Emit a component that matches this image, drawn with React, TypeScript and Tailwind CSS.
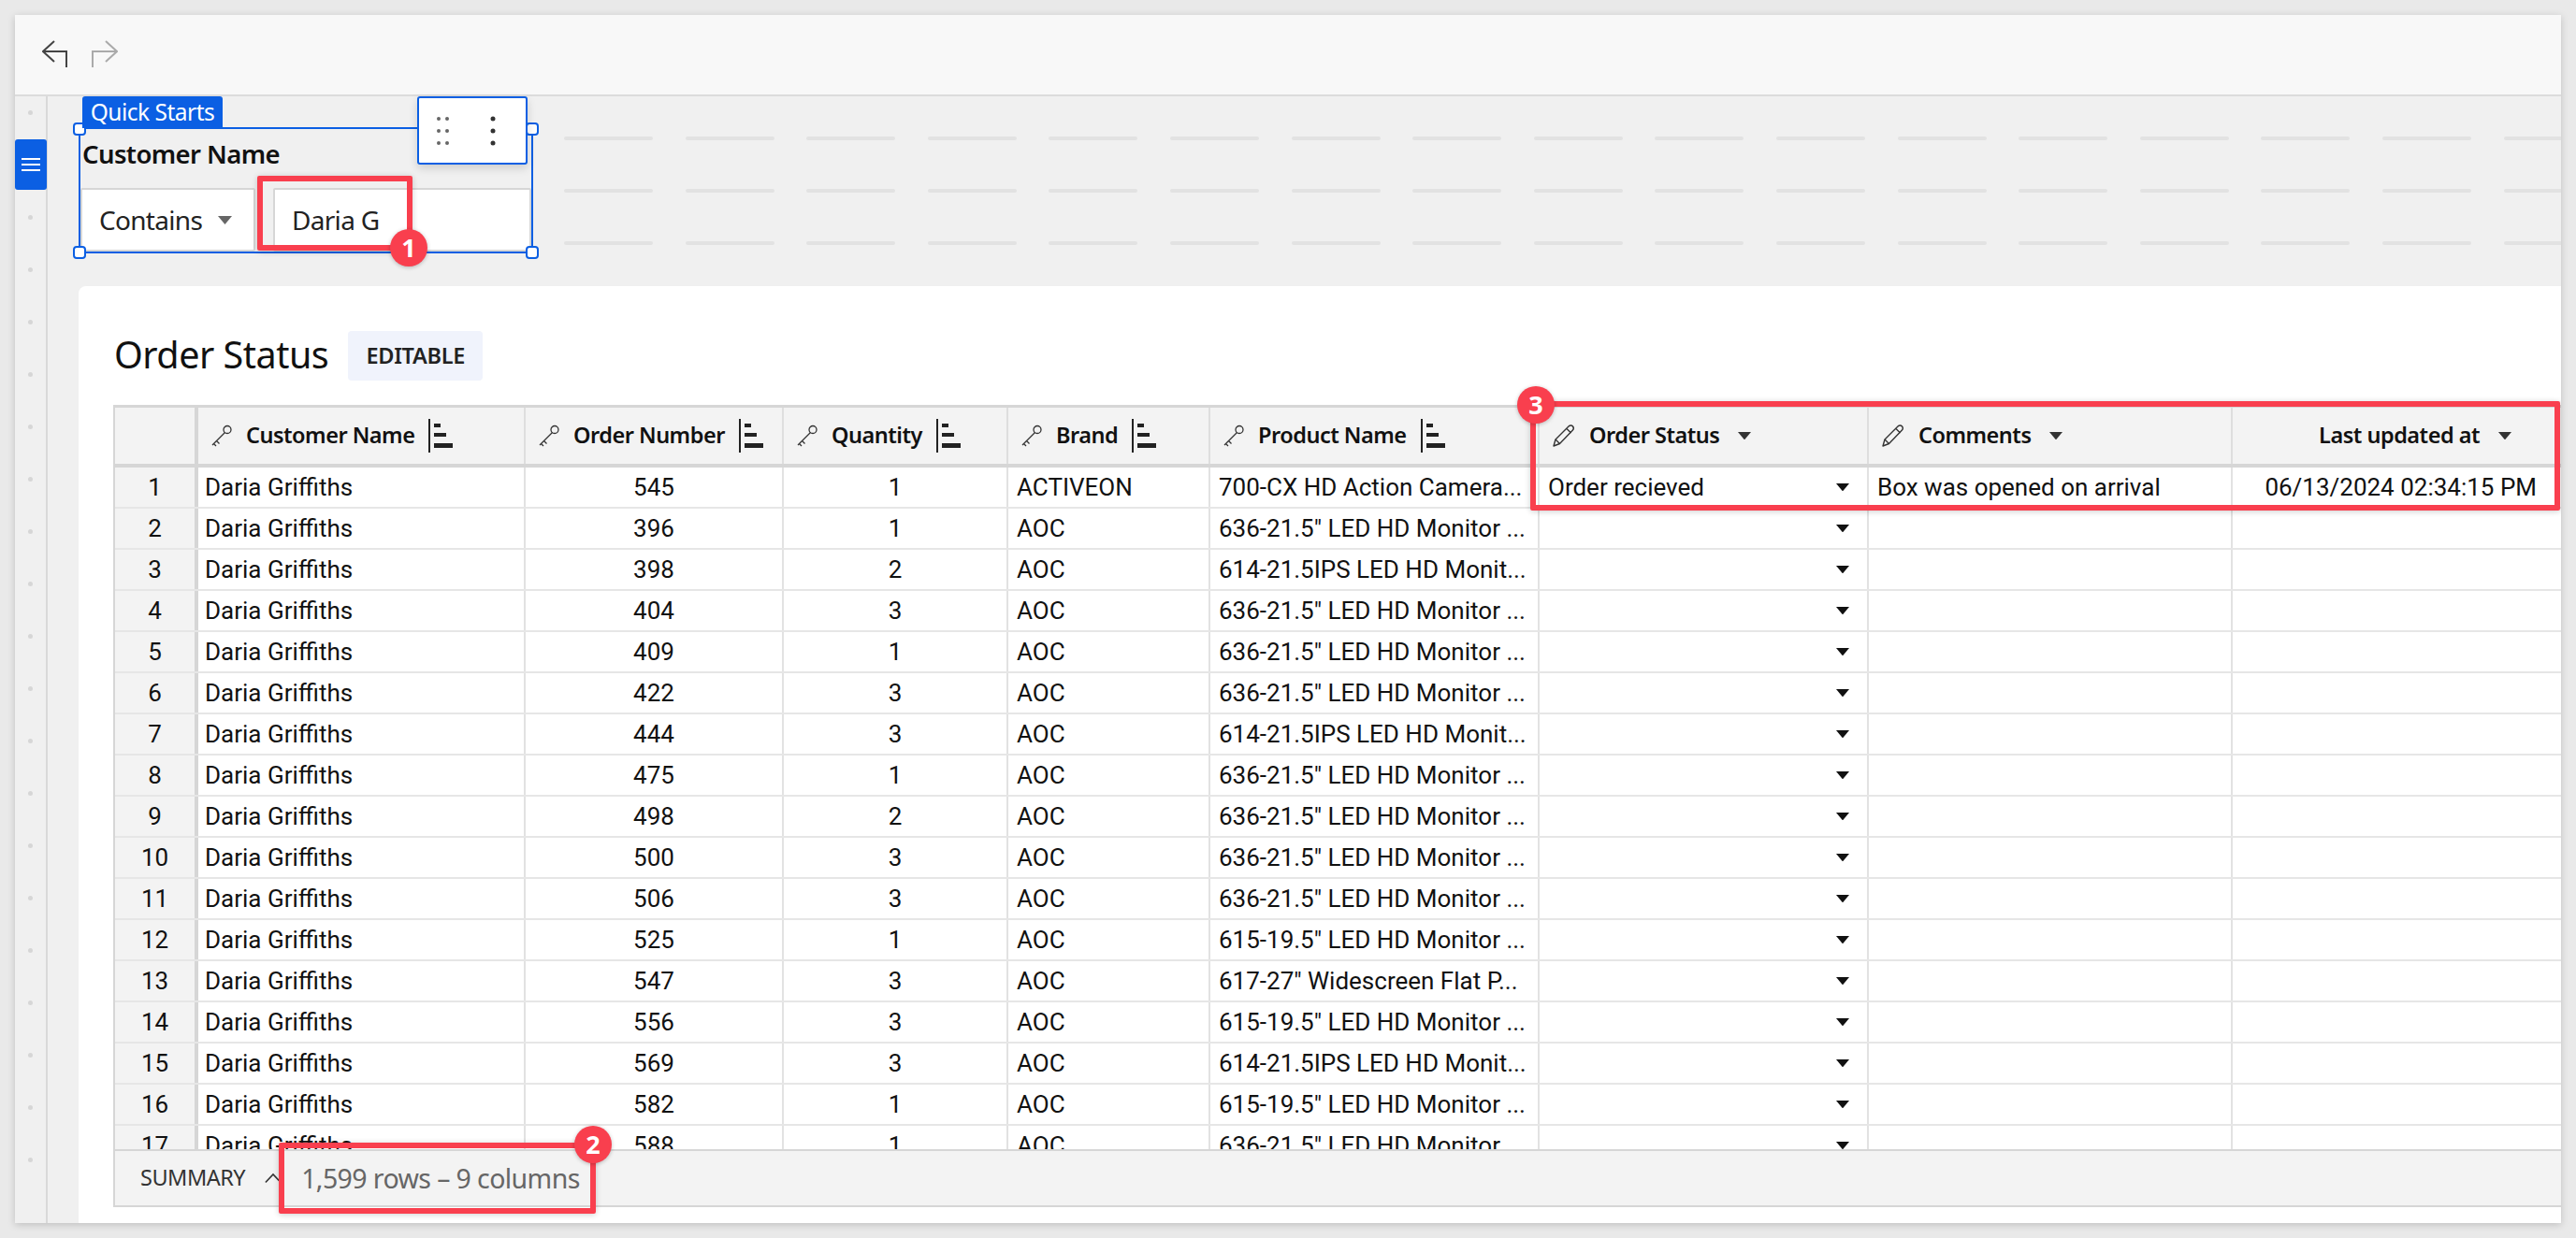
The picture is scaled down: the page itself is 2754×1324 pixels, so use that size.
import React from "react";

const rows: [number, number, number, string, string][] = [
  [1, 545, 1, "ACTIVEON", "700-CX HD Action Camera..."],
  [2, 396, 1, "AOC", '636-21.5" LED HD Monitor ...'],
  [3, 398, 2, "AOC", "614-21.5IPS LED HD Monit..."],
  [4, 404, 3, "AOC", '636-21.5" LED HD Monitor ...'],
  [5, 409, 1, "AOC", '636-21.5" LED HD Monitor ...'],
  [6, 422, 3, "AOC", '636-21.5" LED HD Monitor ...'],
  [7, 444, 3, "AOC", "614-21.5IPS LED HD Monit..."],
  [8, 475, 1, "AOC", '636-21.5" LED HD Monitor ...'],
  [9, 498, 2, "AOC", '636-21.5" LED HD Monitor ...'],
  [10, 500, 3, "AOC", '636-21.5" LED HD Monitor ...'],
  [11, 506, 3, "AOC", '636-21.5" LED HD Monitor ...'],
  [12, 525, 1, "AOC", '615-19.5" LED HD Monitor ...'],
  [13, 547, 3, "AOC", '617-27" Widescreen Flat P...'],
  [14, 556, 3, "AOC", '615-19.5" LED HD Monitor ...'],
  [15, 569, 3, "AOC", "614-21.5IPS LED HD Monit..."],
  [16, 582, 1, "AOC", '615-19.5" LED HD Monitor ...'],
  [17, 588, 1, "AOC", '636-21.5" LED HD Monitor ...'],
];

const ui = "font-['Noto_Sans',sans-serif]";
const cell = "font-['Roboto',sans-serif]";

const KeyIcon = () => (
  <svg width="24" height="24" viewBox="0 0 24 24" fill="none" stroke="#333" strokeWidth="1.3" className="shrink-0 mr-[-1px]">
    <circle cx="18" cy="5.5" r="4" />
    <path d="M15.5 8.5 2 22M6.5 17.5l3 3M3.5 20.5l2.5 2.5" />
  </svg>
);
const PencilIcon = () => (
  <svg width="26" height="26" viewBox="0 0 26 26" fill="none" stroke="#333" strokeWidth="1.4" strokeLinejoin="round" className="shrink-0">
    <path d="M2 24l2-7L18 3c1.5-1.5 3.5-1.2 4.5 0s1 3-.3 4.3L8.500 21.500z" />
    <path d="M4 17l4.500 4.500M16 5.500l4.500 4.500" />
  </svg>
);
const SortIcon = () => (
  <svg width="26" height="36" viewBox="0 0 26 36" className="shrink-0" fill="#222">
    <rect x="0" y="0" width="2" height="36" />
    <rect x="6" y="5" width="7" height="4" />
    <rect x="6" y="15" width="13" height="4" />
    <rect x="6" y="26" width="20" height="5" />
  </svg>
);
const Caret = ({ color = "#333", w = 15, className = "" }: { color?: string; w?: number; className?: string }) => (
  <svg width={w} height={w * 0.6} viewBox="0 0 10 6" className={`shrink-0 ${className}`}>
    <path d="M0 0h10L5 6z" fill={color} />
  </svg>
);

const Badge = ({ n, className }: { n: number; className: string }) => (
  <div className={`absolute w-[40px] h-[40px] rounded-full bg-[#f93f4e] text-white flex items-center justify-center text-[27px] font-bold shadow-[0_1px_4px_rgba(0,0,0,0.25)] ${ui} ${className}`}>
    {n}
  </div>
);

const RedBox = ({ className }: { className: string }) => (
  <div className={`absolute border-[6px] border-[#f93f4e] rounded-[2px] shadow-[0_1px_6px_rgba(0,0,0,0.2)] ${className}`} />
);

const Handle = ({ className }: { className: string }) => (
  <div className={`absolute w-[14px] h-[14px] bg-white border-2 border-[#0b5fe3] rounded-[4px] ${className}`} />
);

const headerCols = [
  { w: "w-[350px]", label: "Customer Name" },
  { w: "w-[276px]", label: "Order Number" },
  { w: "w-[240px]", label: "Quantity" },
  { w: "w-[216px]", label: "Brand" },
  { w: "w-[352px]", label: "Product Name" },
];

const colBorder = "border-r-2 border-[#e2e2e2]";
const headText = `text-[23.5px] font-semibold text-[#111] tracking-[-0.5px] ${ui}`;

export default function App() {
  return (
    <div className="w-[2754px] h-[1324px] bg-[#e9e9e9] pt-[16px] pl-[16px] overflow-hidden">
      <div className="w-[2722px] h-[1292px] flex flex-col bg-[#f0f0f0] shadow-[0_2px_8px_rgba(0,0,0,0.18)] overflow-hidden relative">
        {/* Top bar */}
        <div className="h-[87px] shrink-0 bg-[#f8f8f8] border-b-2 border-[#dcdcdc] flex items-center pl-[29px] gap-[26px] pb-[2px]">
          <svg width="27" height="30" viewBox="0 0 27 30" fill="none" stroke="#444" strokeWidth="2">
            <path d="M26 29V12H2M13 1 1 12l12 11" />
          </svg>
          <svg width="28" height="30" viewBox="0 0 28 30" fill="none" stroke="#aaa" strokeWidth="2">
            <path d="M1 29V12h25M15 1l12 11-12 11" />
          </svg>
        </div>

        <div className="flex flex-1 min-h-0">
          {/* Rail */}
          <div className="w-[35px] shrink-0 border-r-2 border-[#d9d9d9] relative flex flex-col items-center pt-[15px] gap-[51px]">
            {Array.from({ length: 21 }).map((_, i) => (
              <div key={i} className="w-[5px] h-[5px] rounded-full bg-[#d6d6d6] shrink-0" />
            ))}
            <div className="absolute left-0 top-[46px] w-[34px] h-[54px] bg-[#0b5fe3] rounded-[3px] flex flex-col items-center justify-center gap-[4px]">
              <div className="w-[20px] h-[2px] bg-white" />
              <div className="w-[20px] h-[2px] bg-white" />
              <div className="w-[20px] h-[2px] bg-white" />
            </div>
          </div>

          {/* Canvas */}
          <div className="flex-1 min-w-0 flex flex-col">
            {/* Controls row */}
            <div className="h-[203px] shrink-0 flex pl-[33px] pt-[33px] relative">
              <div className="w-[486px] h-[135px] border-2 border-[#0b5fe3] flex flex-col relative shrink-0">
                <div className={`h-[63px] flex items-center pl-[2px] pb-[9px] text-[27.5px] font-semibold text-[#111] tracking-[-0.6px] ${ui}`}>Customer Name</div>
                <div className="flex flex-1 gap-[19px]">
                  <div className={`w-[187px] bg-white border-2 border-[#d6d6d6] rounded-[2px] flex items-center pl-[18px] gap-[17px] text-[28px] text-[#222] tracking-[-0.7px] ${ui}`}>
                    Contains <Caret color="#666" />
                  </div>
                  <div className={`flex-1 bg-white border-2 border-[#d6d6d6] rounded-[2px] flex items-center pl-[18px] text-[28px] text-[#222] tracking-[-0.7px] ${ui}`}>
                    Daria G
                  </div>
                </div>
                <Handle className="left-[-8px] top-[-7px]" />
                <Handle className="right-[-8px] top-[-7px]" />
                <Handle className="left-[-8px] bottom-[-8px]" />
                <Handle className="right-[-8px] bottom-[-8px]" />
                <div className={`absolute left-[2px] top-[-35px] h-[34px] w-[150px] bg-[#0b5fe3] rounded-t-[3px] text-white text-[24.5px] flex items-center justify-center tracking-[-0.5px] ${ui}`}>Quick Starts</div>
                <div className="absolute left-[360px] top-[-35px] w-[118px] h-[73px] bg-white border-2 border-[#0b5fe3] rounded-[3px] shadow-[0_4px_10px_rgba(0,0,0,0.15)] flex items-center justify-between pl-[18px] pr-[32px]">
                  <svg width="15" height="32" viewBox="0 0 15 32" fill="#666">
                    <circle cx="3" cy="3" r="2" /><circle cx="12" cy="3" r="2" />
                    <circle cx="3" cy="16" r="2" /><circle cx="12" cy="16" r="2" />
                    <circle cx="3" cy="29" r="2" /><circle cx="12" cy="29" r="2" />
                  </svg>
                  <svg width="6" height="32" viewBox="0 0 6 32" fill="#333">
                    <circle cx="3" cy="3" r="2.500" /><circle cx="3" cy="16" r="2.500" /><circle cx="3" cy="29" r="2.500" />
                  </svg>
                </div>
              </div>
              {/* Dashed layout grid */}
              <div className="flex flex-col gap-[52px] ml-[33px] pt-[10px]">
                {[0, 1, 2].map((r) => (
                  <div key={r} className="flex gap-[34.6px]">
                    {Array.from({ length: 17 }).map((_, i) => (
                      <div key={i} className="w-[95px] h-[4px] bg-[#e2e2e2] rounded-[2px] shrink-0" />
                    ))}
                  </div>
                ))}
              </div>
            </div>

            {/* Card */}
            <div className="flex-1 min-h-0 ml-[33px] bg-white rounded-tl-[8px] flex flex-col overflow-hidden">
              <div className="h-[127px] shrink-0 flex items-start pl-[38px] pt-[48px] gap-[21px]">
                <h1 className={`text-[39.5px] leading-[50px] font-normal text-[#111] tracking-[-0.5px] ${ui}`}>Order Status</h1>
                <span className={`h-[53px] w-[144px] bg-[#f0f3fc] rounded-[4px] text-[23.5px] font-semibold text-[#222] tracking-[-0.3px] flex items-center justify-center ${ui}`}>EDITABLE</span>
              </div>
              <div className="ml-[37px] border-l-2 border-[#d6d6d6] flex-1 min-h-0 flex flex-col">
                {/* Header */}
                <div className="h-[67px] shrink-0 flex bg-[#f3f3f3] border-t-[3px] border-b-[4px] border-[#d6d6d6]">
                  <div className="w-[89px] shrink-0 border-r-4 border-[#d6d6d6]" />
                  {headerCols.map((c) => (
                    <div key={c.label} className={`${c.w} shrink-0 pl-[13px] border-r-2 border-[#dedede] flex items-center gap-[15px] ${headText}`}>
                      <KeyIcon />
                      <span>{c.label}</span>
                      <SortIcon />
                    </div>
                  ))}
                  <div className={`w-[352px] shrink-0 pl-[13px] border-r-2 border-[#dedede] flex items-center gap-[14px] ${headText}`}>
                    <PencilIcon />
                    <span>Order Status</span>
                    <Caret color="#333" w={14} className="ml-[6px]" />
                  </div>
                  <div className={`w-[389px] shrink-0 pl-[13px] border-r-2 border-[#dedede] flex items-center gap-[14px] ${headText}`}>
                    <PencilIcon />
                    <span>Comments</span>
                    <Caret color="#333" w={14} className="ml-[6px]" />
                  </div>
                  <div className={`flex-1 pr-[53px] flex items-center justify-end gap-[20px] ${headText}`}>
                    <span>Last updated at</span>
                    <Caret color="#333" w={14} />
                  </div>
                </div>
                {/* Body */}
                <div className={`flex-1 min-h-0 overflow-hidden text-[26px] text-[#111] ${cell}`}>
                  {rows.map(([n, order, qty, brand, product]) => (
                    <div key={n} className="h-[44px] flex border-b-2 border-[#e6e6e6]">
                      <div className="w-[89px] shrink-0 bg-[#f3f3f3] border-r-4 border-[#d6d6d6] flex items-center justify-center">{n}</div>
                      <div className={`w-[350px] shrink-0 pl-[7px] flex items-center ${colBorder}`}>Daria Griffiths</div>
                      <div className={`w-[276px] shrink-0 flex items-center justify-center ${colBorder}`}>{order}</div>
                      <div className={`w-[240px] shrink-0 flex items-center justify-center ${colBorder}`}>{qty}</div>
                      <div className={`w-[216px] shrink-0 pl-[9px] flex items-center ${colBorder}`}>{brand}</div>
                      <div className={`w-[352px] shrink-0 pl-[9px] flex items-center whitespace-nowrap overflow-hidden ${colBorder}`}>{product}</div>
                      <div className={`w-[352px] shrink-0 pl-[9px] pr-[19px] flex items-center justify-between ${colBorder}`}>
                        <span>{n === 1 ? "Order recieved" : ""}</span>
                        <Caret color="#111" w={14} />
                      </div>
                      <div className={`w-[389px] shrink-0 pl-[9px] flex items-center ${colBorder}`}>{n === 1 ? "Box was opened on arrival" : ""}</div>
                      <div className="flex-1 pr-[26px] flex items-center justify-end whitespace-nowrap">{n === 1 ? "06/13/2024 02:34:15 PM" : ""}</div>
                    </div>
                  ))}
                </div>
                {/* Summary */}
                <div className="h-[62px] shrink-0 bg-[#f3f3f3] border-t-2 border-b-2 border-[#d6d6d6] flex items-center pl-[27px]">
                  <span className={`text-[23.5px] text-[#333] tracking-[-0.5px] ${ui}`}>SUMMARY</span>
                  <svg width="18" height="12" viewBox="0 0 20 12" fill="none" stroke="#333" strokeWidth="1.800" className="ml-[21px]">
                    <path d="M1 11 10 1.500 19 11" />
                  </svg>
                  <span className={`ml-[21px] text-[28.5px] text-[#666] tracking-[-0.6px] ${ui}`}>1,599 rows – 9 columns</span>
                </div>
              </div>
              <div className="h-[17px] shrink-0" />
            </div>
          </div>
        </div>

        {/* Annotations */}
        <RedBox className="left-[259px] top-[172px] w-[166px] h-[80px]" />
        <Badge n={1} className="left-[401px] top-[229px]" />
        <RedBox className="left-[282px] top-[1206px] w-[339px] h-[76px]" />
        <Badge n={2} className="left-[598px] top-[1188px]" />
        <RedBox className="left-[1620px] top-[413px] w-[1101px] h-[117px]" />
        <Badge n={3} className="left-[1606px] top-[397px]" />
      </div>
    </div>
  );
}
